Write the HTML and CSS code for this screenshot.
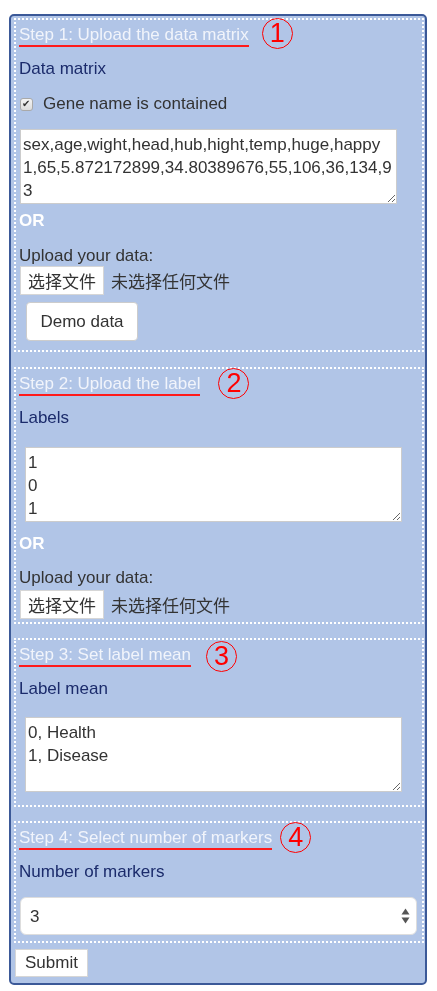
FILE: index.html
```html
<!DOCTYPE html>
<html lang="en">
<head>
<meta charset="utf-8">
<title>Marker selection</title>
<link rel="stylesheet" href="styles.css">
</head>
<body>
<form class="panel">
  <div class="step step-1">
    <div class="step-title"><span class="step-text">Step 1: Upload the data matrix</span><span class="mark m1">1</span></div>
    <div class="field-label">Data matrix</div>
    <label class="check-row"><input type="checkbox" class="check" checked><span>Gene name is contained</span></label>
    <textarea class="data-box box-1" rows="3">sex,age,wight,head,hub,hight,temp,huge,happy
1,65,5.872172899,34.80389676,55,106,36,134,93</textarea>
    <div class="or or-1">OR</div>
    <div class="upload-label">Upload your data:</div>
    <div class="file-row"><button type="button" class="file-btn">选择文件</button><span class="file-name">未选择任何文件</span></div>
    <button type="button" class="demo-btn">Demo data</button>
  </div>

  <div class="step step-2">
    <div class="step-title"><span class="step-text">Step 2: Upload the label</span><span class="mark m2">2</span></div>
    <div class="field-label">Labels</div>
    <textarea class="data-box box-2" rows="3">1
0
1</textarea>
    <div class="or or-2">OR</div>
    <div class="upload-label">Upload your data:</div>
    <div class="file-row file-row-2"><button type="button" class="file-btn">选择文件</button><span class="file-name">未选择任何文件</span></div>
  </div>

  <div class="step step-3">
    <div class="step-title"><span class="step-text">Step 3: Set label mean</span><span class="mark m3">3</span></div>
    <div class="field-label">Label mean</div>
    <textarea class="data-box box-2" rows="3">0, Health
1, Disease</textarea>
  </div>

  <div class="step step-4">
    <div class="step-title"><span class="step-text">Step 4: Select number of markers</span><span class="mark m4">4</span></div>
    <div class="field-label">Number of markers</div>
    <div class="select-wrap">
      <select class="select">
        <option>3</option>
      </select>
      <svg class="select-arrows" width="9" height="16" viewBox="0 0 9 16" aria-hidden="true">
        <path d="M4.5 0.5 L8.5 6.5 L0.5 6.5 Z" fill="#555"/>
        <path d="M4.5 15.5 L8.5 9.5 L0.5 9.5 Z" fill="#555"/>
      </svg>
    </div>
  </div>

  <button type="submit" class="submit-btn">Submit</button>
</form>
</body>
</html>
```

FILE: styles.css
```css
html, body {
  margin: 0;
  padding: 0;
  background: #ffffff;
}

body {
  font-family: "Liberation Sans", Arial, "Noto Sans CJK SC", sans-serif;
  font-size: 17px;
  color: #333333;
}

.panel {
  box-sizing: border-box;
  width: 418px;
  margin: 14px 0 0 9px;
  padding: 2px 1px 6px 3px;
  border: 2px solid #3b5998;
  border-radius: 5px;
  background: #b1c5e7;
}

.step {
  border: 2px dotted #ffffff;
  padding: 0 3px 4px 3px;
}

.step-1 { padding-bottom: 9px; }
.step-2 { margin-top: 15px; padding-bottom: 3px; }
.step-3 { margin-top: 14px; padding-bottom: 13px; }
.step-4 { margin-top: 14px; padding-bottom: 6px; }

.step-title {
  display: flex;
  align-items: flex-start;
  height: 30px;
}

.step-text {
  margin-top: 4px;
  line-height: 21px;
  color: #f1f4fb;
  border-bottom: 2px solid #ff1a1a;
  white-space: nowrap;
}

.mark {
  box-sizing: border-box;
  width: 31px;
  height: 31px;
  margin-top: -1px;
  border: 1.6px solid #ff0000;
  border-radius: 50%;
  color: #ff0000;
  font-family: "Liberation Sans", Arial, sans-serif;
  font-weight: 400;
  font-size: 27px;
  line-height: 29px;
  text-align: center;
}

.m1 { margin-left: 13px; margin-top: -2px; }
.m2 { margin-left: 18px; }
.m3 { margin-left: 15px; margin-top: 1px; }
.m4 { margin-left: 8px; }

.field-label {
  margin-top: 9px;
  line-height: 20px;
  color: #1b2b6b;
}

.check-row {
  display: flex;
  align-items: center;
  gap: 10px;
  margin-top: 15px;
  height: 20px;
  margin-left: 1px;
}

.check {
  appearance: none;
  -webkit-appearance: none;
  box-sizing: border-box;
  width: 13px;
  height: 13px;
  margin: 0;
  border: 1px solid #a9a9a9;
  border-radius: 3px;
  background: linear-gradient(#f4f4f4, #dcdcdc);
  position: relative;
}

.check:checked::after {
  content: "\2714";
  position: absolute;
  left: 1px;
  top: -2px;
  font-size: 10px;
  line-height: 14px;
  color: #333333;
  font-family: "DejaVu Sans", sans-serif;
}

.data-box {
  display: block;
  box-sizing: border-box;
  width: 377px;
  height: 75px;
  padding: 3px 2px;
  border: 1px solid #cccccc;
  background: #ffffff;
  font-family: "Liberation Sans", Arial, sans-serif;
  font-size: 17px;
  line-height: 23px;
  color: #333333;
}

.box-1 {
  margin: 15px 0 0 1px;
}

.box-2 {
  margin: 19px 0 0 6px;
}

.step-3 .box-2 {
  margin-top: 18px;
}

.or {
  line-height: 20px;
  font-weight: bold;
  color: #ffffff;
}

.or-1 { margin-top: 7px; }
.or-2 { margin-top: 12px; }

.upload-label {
  margin-top: 15px;
  line-height: 20px;
  color: #333333;
}

.step-2 .upload-label { margin-top: 14px; }

.file-row {
  display: flex;
  align-items: center;
  gap: 7px;
  height: 29px;
  margin-left: 1px;
}

.file-row-2 { margin-top: 2px; }

.file-btn {
  box-sizing: border-box;
  width: 84px;
  height: 29px;
  padding: 0;
  border: 1px solid #d6d6d6;
  background: #ffffff;
  font-family: "Noto Sans CJK SC", sans-serif;
  font-size: 17px;
  color: #333333;
}

.file-name {
  font-family: "Noto Sans CJK SC", sans-serif;
  font-size: 17px;
  color: #333333;
}

.demo-btn {
  display: block;
  box-sizing: border-box;
  width: 112px;
  height: 39px;
  margin: 7px 0 0 7px;
  padding: 0;
  border: 1px solid #cccccc;
  border-radius: 4px;
  background: #ffffff;
  font-family: "Liberation Sans", Arial, sans-serif;
  font-size: 17px;
  color: #333333;
}

.select-wrap {
  position: relative;
  margin: 15px 0 0 1px;
  width: 397px;
}

.select {
  appearance: none;
  -webkit-appearance: none;
  display: block;
  box-sizing: border-box;
  width: 397px;
  height: 38px;
  padding: 0 0 0 9px;
  border: 1px solid #dddddd;
  border-radius: 6px;
  background: #ffffff;
  font-family: "Liberation Sans", Arial, sans-serif;
  font-size: 17px;
  color: #333333;
}

.select-arrows {
  position: absolute;
  right: 7px;
  top: 11px;
}

.submit-btn {
  display: block;
  box-sizing: border-box;
  width: 73px;
  height: 28px;
  margin: 6px 0 0 1px;
  padding: 0;
  border: 1px solid #d6d6d6;
  background: #ffffff;
  font-family: "Liberation Sans", Arial, sans-serif;
  font-size: 17px;
  color: #333333;
}
```
